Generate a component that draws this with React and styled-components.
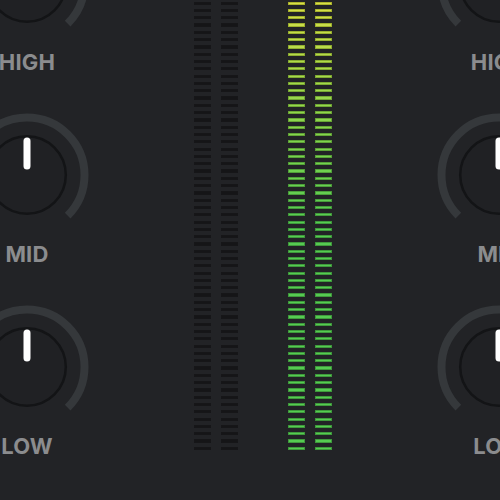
import React from "react";
import styled, { createGlobalStyle } from "styled-components";

const Global = createGlobalStyle`
  html, body { margin: 0; padding: 0; background: #222326; overflow: hidden; }
  #root { width: 500px; height: 500px; overflow: hidden; }
`;

const Mixer = styled.div`
  display: flex;
  width: 500px;
  height: 500px;
  overflow: hidden;
  background: #222326;
  font-family: Inter, "Liberation Sans", sans-serif;
`;

const KnobColumn = styled.div`
  flex: 0 0 130px;
  width: 130px;
  display: flex;
  flex-direction: column;
  align-items: center;
  gap: 37px;
  margin-top: -82px;
  margin-left: ${(p) => p.$left || 0}px;
  margin-right: ${(p) => p.$right || 0}px;
`;

const EqUnit = styled.div`
  display: flex;
  flex-direction: column;
  align-items: center;
  gap: 3px;
`;

const KnobLabel = styled.div`
  font-size: 22px;
  line-height: 22px;
  height: 22px;
  font-weight: 700;
  color: #8b8c8e;
  letter-spacing: 0.2px;
  white-space: nowrap;
`;

const MeterSection = styled.div`
  flex: 1 0 auto;
  display: flex;
  justify-content: center;
  gap: 50px;
`;

const MeterPair = styled.div`
  display: flex;
  gap: 10px;
`;

const Meter = styled.div`
  width: 17px;
  display: flex;
  flex-direction: column;
  gap: 4.12px;
  padding-top: 1.6px;
`;

const Segment = styled.div`
  width: 17px;
  height: 3.2px;
  box-sizing: border-box;
  border-radius: 0.5px;
  background: ${(p) => p.$fill};
  border: 1px solid ${(p) => p.$edge};
`;

const SEGMENTS = 62;

function segColor(i, lit) {
  if (!lit) return { fill: "#151517", edge: "#161618" };
  const t = Math.min(1, i / 30);
  const hue = 63 + (118 - 63) * t;
  const sat = 70 - 16 * t;
  const light = 58 - 2 * t;
  return {
    fill: `hsl(${hue}, ${sat}%, ${light}%)`,
    edge: `hsl(${hue}, ${sat - 10}%, ${light - 14}%)`,
  };
}

function MeterBar({ lit }) {
  return (
    <Meter>
      {Array.from({ length: SEGMENTS }, (_, i) => {
        const c = segColor(i, lit);
        return <Segment key={i} $fill={c.fill} $edge={c.edge} />;
      })}
    </Meter>
  );
}

function Knob() {
  const cx = 65;
  const cy = 65;
  const r = 57.5;
  const a0 = (-135 * Math.PI) / 180;
  const a1 = (135 * Math.PI) / 180;
  const sx = cx + r * Math.sin(a0);
  const sy = cy - r * Math.cos(a0);
  const ex = cx + r * Math.sin(a1);
  const ey = cy - r * Math.cos(a1);
  return (
    <svg width="130" height="130" viewBox="0 0 130 130">
      <path
        d={`M ${sx} ${sy} A ${r} ${r} 0 1 1 ${ex} ${ey}`}
        fill="none"
        stroke="#35383b"
        strokeWidth="8"
      />
      <circle cx={cx} cy={cy} r="38.8" fill="#202124" stroke="#131416" strokeWidth="2.5" />
      <rect x={cx - 3.5} y={cy - 37.5} width="7" height="32" rx="3.5" fill="#ffffff" />
    </svg>
  );
}

const BANDS = ["HIGH", "MID", "LOW"];

function KnobStrip({ left, right }) {
  return (
    <KnobColumn $left={left} $right={right}>
      {BANDS.map((b) => (
        <EqUnit key={b}>
          <Knob />
          <KnobLabel>{b}</KnobLabel>
        </EqUnit>
      ))}
    </KnobColumn>
  );
}

export default function App() {
  return (
    <>
      <Global />
      <Mixer>
        <KnobStrip left={-38} />
        <MeterSection>
          <MeterPair>
            <MeterBar lit={false} />
            <MeterBar lit={false} />
          </MeterPair>
          <MeterPair>
            <MeterBar lit />
            <MeterBar lit />
          </MeterPair>
        </MeterSection>
        <KnobStrip right={-64} />
      </Mixer>
    </>
  );
}
